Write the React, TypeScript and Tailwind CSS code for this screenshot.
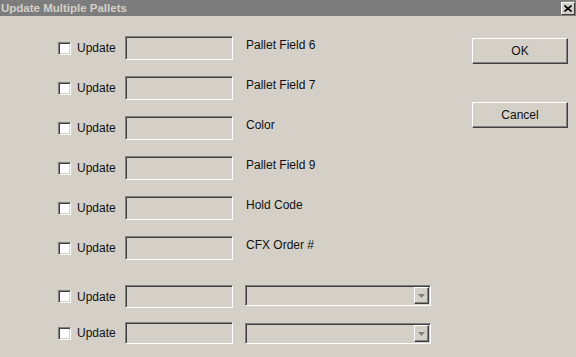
import React from 'react';

const font = { fontFamily: '"Liberation Sans", Arial, sans-serif' };

function CheckBox() {
  return (
    <span className="box-border block h-[13px] w-[13px] border border-b-white border-l-[#808080] border-r-white border-t-[#808080] bg-white shadow-[inset_1px_1px_0_#404040,inset_-1px_-1px_0_#d4d0c8]" />
  );
}

function Sunken({ className }: { className: string }) {
  return (
    <div
      className={`box-border border border-b-white border-l-[#808080] border-r-white border-t-[#808080] bg-[#d4d0c8] shadow-[inset_1px_1px_0_#404040] ${className}`}
    />
  );
}

function Combo() {
  return (
    <div className="ml-[12px] box-border flex h-[21px] w-[186px] justify-end self-start border border-b-white border-l-[#808080] border-r-white border-t-[#808080] bg-[#d4d0c8] p-[1px] shadow-[inset_1px_1px_0_#404040]">
      <div className="box-border flex h-full w-[15px] items-center justify-center border border-b-[#404040] border-l-white border-r-[#404040] border-t-white bg-[#d4d0c8] shadow-[inset_-1px_-1px_0_#808080]">
        <svg width="7" height="4" viewBox="0 0 7 4">
          <path d="M0 0h7L3.5 4z" fill="#808080" />
        </svg>
      </div>
    </div>
  );
}

function UpdateToggle() {
  return (
    <div className="flex w-[67px] items-center">
      <CheckBox />
      <span className="ml-[6px] text-[12px] leading-[14px] text-[#111]">Update</span>
    </div>
  );
}

function Button({ label }: { label: string }) {
  return (
    <button className="box-border flex h-[26px] w-[96px] items-center justify-center border border-b-[#404040] border-l-white border-r-[#404040] border-t-white bg-[#d4d0c8] text-[12px] text-[#111] shadow-[inset_-1px_-1px_0_#808080]">
      {label}
    </button>
  );
}

const fields = ['Pallet Field 6', 'Pallet Field 7', 'Color', 'Pallet Field 9', 'Hold Code', 'CFX Order #'];

export default function App() {
  return (
    <div className="h-[357px] w-[576px] overflow-hidden bg-[#d4d0c8]" style={font}>
      {/* Caption bar */}
      <div className="flex h-[16px] items-center justify-between bg-[#7d7d7d] pl-[1px] pr-[1px]">
        <span className="text-[11.5px] font-bold leading-[14px] text-[#d4d0c8]">Update Multiple Pallets</span>
        <div className="box-border flex h-[13px] w-[14px] items-center justify-center border border-b-[#404040] border-l-white border-r-[#404040] border-t-white bg-[#d4d0c8]">
          <svg width="8" height="7" viewBox="0 0 8 7">
            <path d="M0.5 0.5L7.5 6.5M7.5 0.5L0.5 6.5" stroke="#000" strokeWidth="1.6" />
          </svg>
        </div>
      </div>

      <div className="flex">
        <div className="ml-[58px] flex w-[380px] flex-col pt-[20px]">
          {fields.map((f) => (
            <div key={f} className="mb-[16px] flex h-[24px] items-center">
              <UpdateToggle />
              <Sunken className="h-[24px] w-[108px]" />
              <span className="ml-[13px] mt-[2px] self-start text-[12px] leading-[14px] text-[#111]">{f}</span>
            </div>
          ))}
          <div className="mt-[9px] flex h-[23px] items-center">
            <UpdateToggle />
            <Sunken className="h-[23px] w-[108px]" />
            <Combo />
          </div>
          <div className="mt-[14px] flex h-[22px] items-center">
            <UpdateToggle />
            <Sunken className="h-[22px] w-[108px]" />
            <div className="mt-[1px] flex self-start">
              <Combo />
            </div>
          </div>
        </div>

        <div className="ml-auto mr-[8px] mt-[22px] flex flex-col gap-[38px]">
          <Button label="OK" />
          <Button label="Cancel" />
        </div>
      </div>
    </div>
  );
}
